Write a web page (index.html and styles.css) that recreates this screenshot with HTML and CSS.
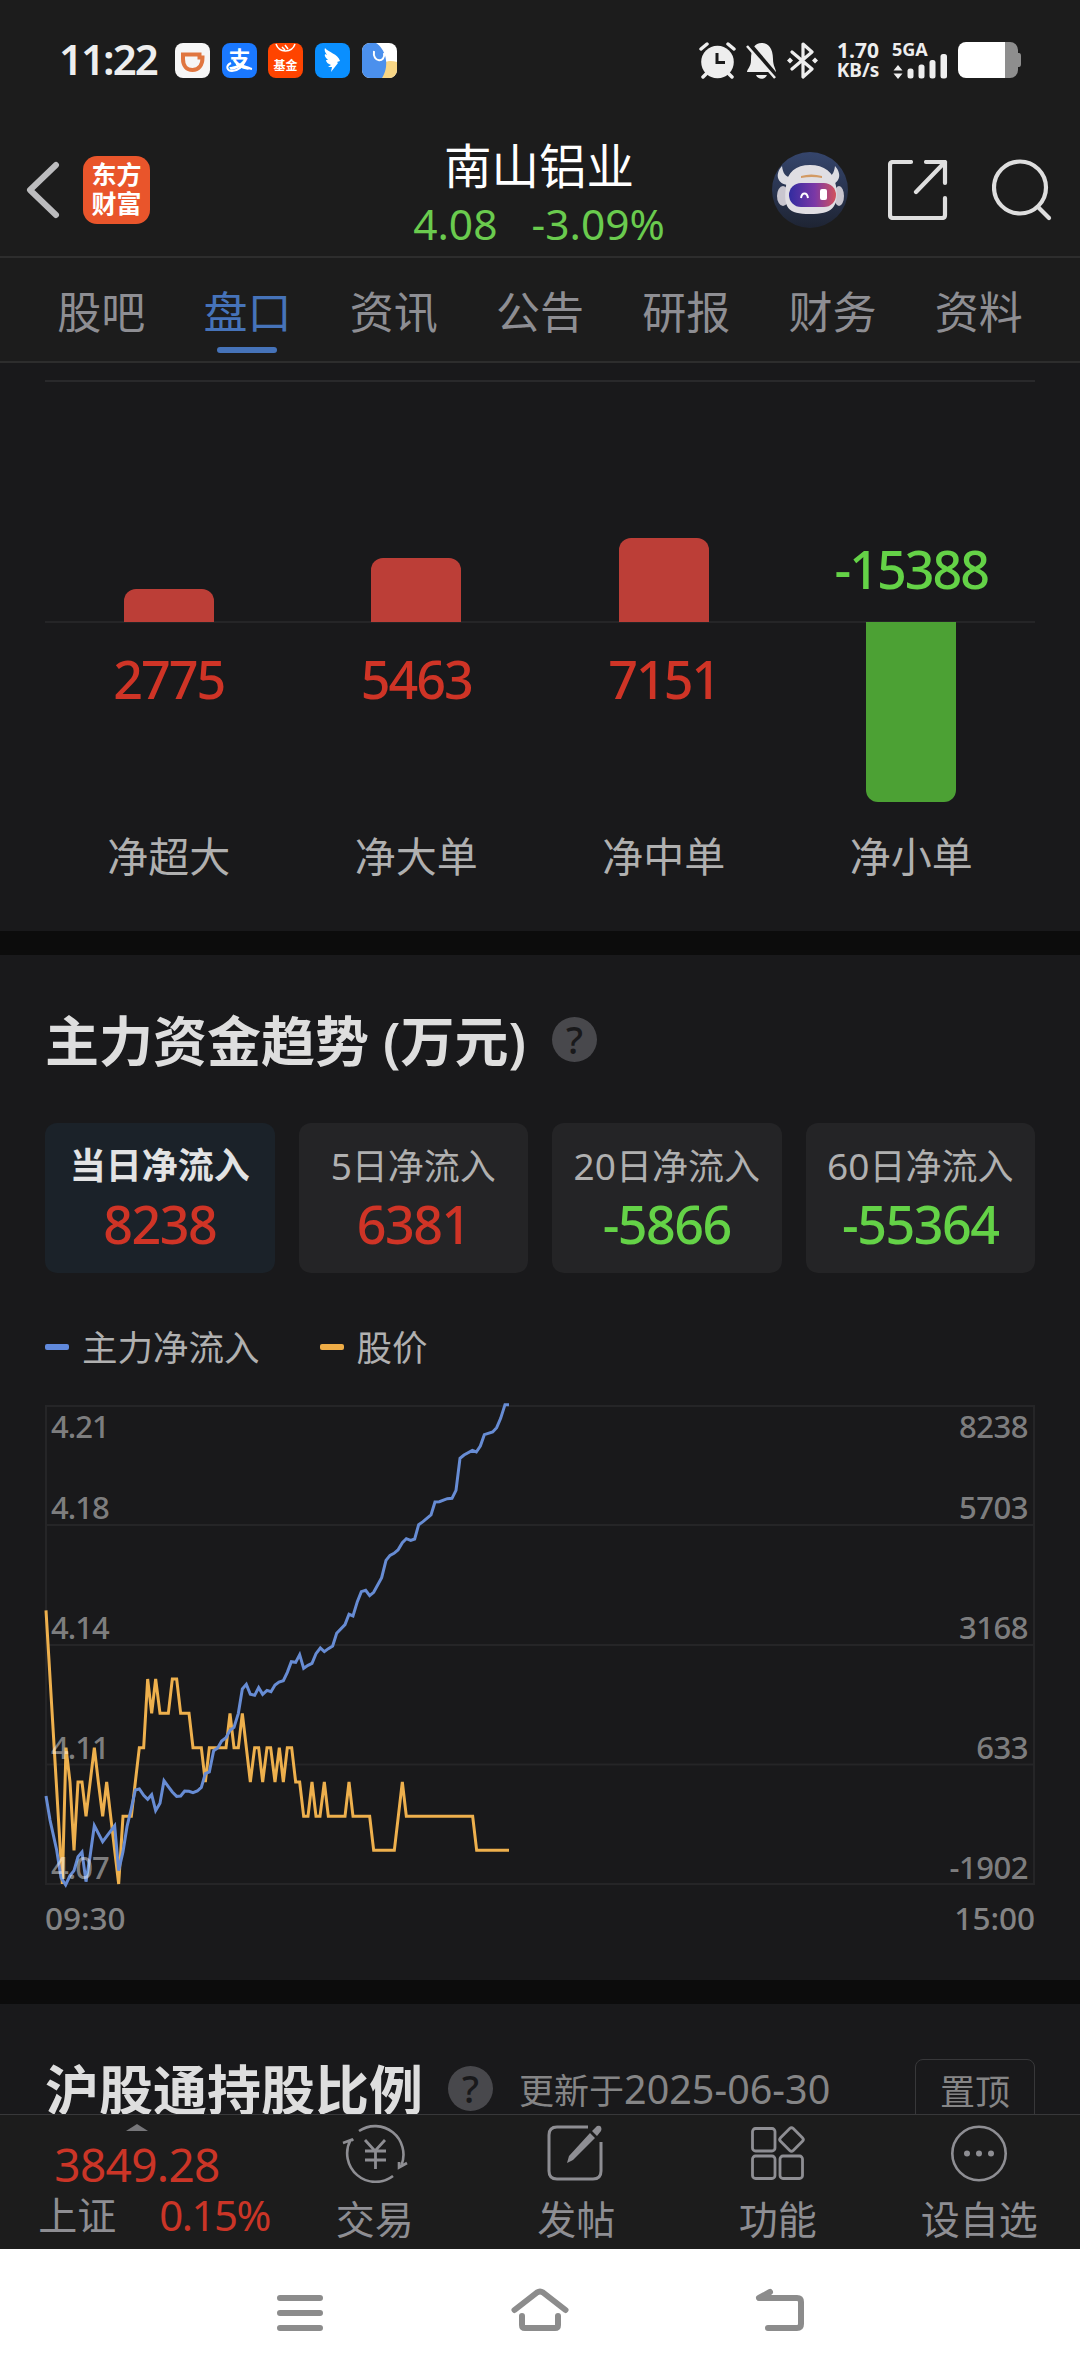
FILE: index.html
```html
<!DOCTYPE html>
<html lang="zh-CN">
<head>
    <meta charset="UTF-8">
    <meta name="viewport" content="width=device-width, initial-scale=1.0">
    <title>南山铝业</title>
    <link rel="stylesheet" href="styles.css">
</head>
<body>
    <div class="status-bar">
        <span class="clock">11:22</span>
        <div class="app-icons">
            <svg viewBox="0 0 35 35"><rect width="35" height="35" rx="8" fill="#f6f6f6"/><path d="M8 11.500h16.500v3h3c0 8-4 12.500-10 12.500S8 22.500 8 16z" fill="none" stroke="#e07640" stroke-width="4"/></svg>
            <svg viewBox="0 0 35 35"><rect width="35" height="35" rx="8" fill="#1a78ff"/><text x="17.500" y="24" class="pay-text">支</text><path d="M9 20c-6 3-4 8 1 8 6 0 11-5 13-10M14 21c6 0 10 4 16 5" fill="none" stroke="#fff" stroke-width="2"/></svg>
            <svg viewBox="0 0 35 35"><rect width="35" height="35" rx="8" fill="#ff4400"/><path d="M8 1a10 10 0 0 0 19 0M14 4l3 3M17 2l3 4" fill="none" stroke="#fff" stroke-width="1.500"/><text x="17.500" y="27" class="fund-text">基金</text></svg>
            <svg viewBox="0 0 35 35"><rect width="35" height="35" rx="8" fill="#0a8fff"/><path d="M10 5c3 4 13 6 15 13l-3 1 1 1-7 9 1-5h-4l3-2c-3-1-5-3-5-5l2 0c-2-2-4-4-3-6l2 1c-2-3-3-5-2-7z" fill="#fff"/></svg>
            <svg viewBox="0 0 35 35"><rect width="35" height="35" rx="8" fill="#fff"/><path d="M22 20c4-3 9-2 13-1v8a8 8 0 0 1-8 8h-8z" fill="#f8d685"/><path d="M8 0h6c8 5 15 20 6 35H8a8 8 0 0 1-8-8V8a8 8 0 0 1 8-8z" fill="#4b90ed"/><path d="M12 8c-2 12 12 12 10 2" fill="none" stroke="#fff" stroke-width="2"/></svg>
        </div>
        <div class="sys-icons">
            <svg width="37" height="37" viewBox="0 0 37 37"><circle cx="18.500" cy="20" r="16.300" fill="#eee"/><path d="M2 7l6-5M35 7l-6-5M4 35l4-4M33 35l-4-4" stroke="#eee" stroke-width="3.500" stroke-linecap="round"/><path d="M18 11v9.500h8" fill="none" stroke="#1c1c1c" stroke-width="3"/></svg>
            <svg width="31" height="37" viewBox="0 0 31 37"><path d="M1 30c0-3 4-5 4-12C5 6 9 1 15.500 1S27 6 27 17c0 7 3 10 3 13zM10 33h11c-2 5-9 5-11 0z" fill="#eee"/><path d="M3 2l28 33" stroke="#1c1c1c" stroke-width="5"/><path d="M1 4l28 32" stroke="#eee" stroke-width="2.500"/></svg>
            <svg width="31" height="37" viewBox="0 0 31 37"><path d="M5 10l20 17-9 8V2l9 8L5 27" fill="none" stroke="#eee" stroke-width="3.200" stroke-linejoin="round" stroke-linecap="round"/><path d="M3 15.500l3 3-3 3-3-3zM28 15.500l3 3-3 3-3-3z" fill="#eee"/></svg>
            <div class="speed"><span>1.70</span><span>KB/s</span></div>
            <svg class="signal" width="56" height="38" viewBox="0 0 56 38"><text x="0" y="15">5GA</text><path d="M6 24l4.500 5.500h-9zM6 38l4.500-5.500h-9z" fill="#eee"/><rect x="15.500" y="27.500" width="6" height="10" rx="2.500" fill="#eee"/><rect x="26.500" y="23.500" width="6" height="14" rx="2.500" fill="#eee"/><rect x="37.500" y="19" width="6" height="18.500" rx="2.500" fill="#eee"/><rect x="48.500" y="13" width="6.500" height="24.500" rx="2.500" fill="#eee"/></svg>
            <svg width="64" height="36" viewBox="0 0 64 36"><path d="M46 0h6a8 8 0 0 1 8 8v3h1q2 0 2 3v8q0 3-2 3h-1v3a8 8 0 0 1-8 8h-6z" fill="#8e8e8e"/><path d="M8 0h39v36H8a8 8 0 0 1-8-8V8a8 8 0 0 1 8-8z" fill="#fff"/></svg>
        </div>
    </div>

    <header class="header">
        <div class="header-left">
            <svg width="36" height="58" viewBox="0 0 36 58"><path d="M30 4L4 29l26 25" fill="none" stroke="#bcbcbe" stroke-width="6" stroke-linecap="round" stroke-linejoin="round"/></svg>
            <div class="logo">东方<br>财富</div>
        </div>
        <div class="stock">
            <h1>南山铝业</h1>
            <p><span>4.08</span><span>-3.09%</span></p>
        </div>
        <div class="header-right">
            <svg width="76" height="76" viewBox="0 0 76 76">
                <defs>
                    <linearGradient id="sky" x1="0" y1="0" x2="0" y2="1"><stop offset="0" stop-color="#35456c"/><stop offset="1" stop-color="#1e2433"/></linearGradient>
                    <linearGradient id="visor" x1="0" y1="0" x2="1" y2="0"><stop offset="0" stop-color="#322ca0"/><stop offset=".55" stop-color="#7b38a6"/><stop offset="1" stop-color="#d2525c"/></linearGradient>
                </defs>
                <circle cx="38" cy="38" r="38" fill="url(#sky)"/>
                <path d="M10 14c-8 9-4 18 6 19l5-8c-7 1-10-3-11-11zM63 14c8 9 4 18-6 19l-5-8c7 1 10-3 11-11z" fill="#dcdce2"/>
                <ellipse cx="11" cy="44" rx="6" ry="10" fill="#c9c6cf"/><ellipse cx="67" cy="44" rx="5" ry="10" fill="#c9c6cf"/>
                <path d="M14 34c1-14 10-21 24-21s24 7 26 21c3 22-4 28-26 28s-27-6-24-28z" fill="#e0dee3"/>
                <path d="M29 24q10-3 21 0v2q-10-2-21 0z" fill="#d39a64"/>
                <rect x="17" y="31" width="47" height="24" rx="12" fill="url(#visor)"/>
                <path d="M29 46c1-6 6-6 7 0" fill="none" stroke="#fff" stroke-width="2"/><rect x="48" y="37" width="7" height="11" rx="2" fill="#fff"/>
            </svg>
            <svg class="share" width="60" height="60" viewBox="0 0 60 60"><path d="M23 2H5Q2 2 2 5v50q0 3 3 3h49q3 0 3-3V38M38 2h19v21M57 2L28 32" fill="none" stroke="#dedede" stroke-width="4.200" stroke-linecap="round" stroke-linejoin="round"/></svg>
            <svg width="60" height="62" viewBox="0 0 60 62"><circle cx="28" cy="28.500" r="26" fill="none" stroke="#dedede" stroke-width="4.200"/><path d="M46 48l11 11" stroke="#dedede" stroke-width="4.200" stroke-linecap="round"/></svg>
        </div>
    </header>

    <nav class="tabs">
        <a>股吧</a>
        <a class="active">盘口</a>
        <a>资讯</a>
        <a>公告</a>
        <a>研报</a>
        <a>财务</a>
        <a>资料</a>
    </nav>

    <main class="content">
        <section class="orders">
            <div class="order up">
                <div class="top"><i class="bar" style="height: 33px"></i></div>
                <div class="bottom"><b>2775</b></div>
                <span>净超大</span>
            </div>
            <div class="order up">
                <div class="top"><i class="bar" style="height: 64px"></i></div>
                <div class="bottom"><b>5463</b></div>
                <span>净大单</span>
            </div>
            <div class="order up">
                <div class="top"><i class="bar" style="height: 84px"></i></div>
                <div class="bottom"><b>7151</b></div>
                <span>净中单</span>
            </div>
            <div class="order down">
                <div class="top"><b>-15388</b></div>
                <div class="bottom"><i class="bar" style="height: 180px"></i></div>
                <span>净小单</span>
            </div>
        </section>

        <section class="trend">
            <h2>主力资金趋势 (万元) <i class="help">?</i></h2>
            <div class="cards">
                <div class="card active"><span>当日净流入</span><b class="red">8238</b></div>
                <div class="card"><span><em>5</em>日净流入</span><b class="red">6381</b></div>
                <div class="card"><span><em>20</em>日净流入</span><b class="green">-5866</b></div>
                <div class="card"><span><em>60</em>日净流入</span><b class="green">-55364</b></div>
            </div>
            <div class="legend">
                <span class="blue">主力净流入</span>
                <span class="orange">股价</span>
            </div>
            <svg class="chart" width="990" height="480" viewBox="0 0 990 480">
                <path class="grid" d="M1 1h988v478H1zM1 120h988M1 240h988M1 359.500h988"/>
                <g transform="scale(.33333) translate(-45 525)">
                    <polyline class="line price" points="48,91 97,912 108,503 120,606 132,811 144,606 156,606 168,709 193,503 205,606 218,709 230,606 242,709 254,811 266,912 279,709 304,709 328,503 341,503 353,297 365,400 377,297 390,400 415,400 427,297 440,297 452,400 477,400 489,503 514,503 526,606 538,503 588,503 600,400 612,503 625,503 637,400 649,503 661,606 674,503 686,503 698,606 711,503 722,503 735,606 748,503 760,606 772,503 785,503 797,606 809,606 821,709 834,709 846,606 858,709 870,709 883,606 895,709 945,709 957,606 969,709 1019,709 1031,811 1093,811 1117,606 1129,709 1328,709 1340,811 1437,811"/>
                    <polyline class="line inflow" points="48,648 60,720 80,810 93,893 107,915 120,887 132,872 144,830 156,816 168,905 180,830 193,737 218,785 254,737 266,872 279,815 291,740 304,685 316,630 328,627 341,646 353,658 365,644 377,692 390,670 402,602 415,620 427,636 440,649 452,648 464,633 477,634 489,638 502,633 514,622 526,581 538,576 551,512 563,504 575,483 588,473 600,451 612,442 625,400 637,327 649,313 661,343 674,346 686,323 698,343 711,331 723,335 735,315 747,306 760,302 772,277 784,245 797,247 809,224 821,265 834,256 846,250 858,221 871,204 883,215 895,206 908,198 920,160 945,134 957,103 969,108 982,65 994,35 1007,31 1019,47 1031,37 1055,-7 1068,-59 1080,-74 1092,-80 1104,-90 1117,-112 1129,-124 1142,-119 1154,-123 1166,-166 1179,-175 1203,-195 1215,-234 1228,-235 1252,-244 1266,-245 1278,-269 1290,-365 1302,-375 1327,-389 1339,-384 1351,-402 1363,-436 1388,-444 1400,-457 1412,-485 1425,-526 1437,-526"/>
                </g>
                <g class="axis">
                    <text x="6" y="33">4.21</text>
                    <text x="6" y="114">4.18</text>
                    <text x="6" y="234">4.14</text>
                    <text x="6" y="354">4.11</text>
                    <text x="6" y="474">4.07</text>
                </g>
                <g class="axis right">
                    <text x="983" y="33">8238</text>
                    <text x="983" y="114">5703</text>
                    <text x="983" y="234">3168</text>
                    <text x="983" y="354">633</text>
                    <text x="983" y="474">-1902</text>
                </g>
            </svg>
            <div class="times"><span>09:30</span><span>15:00</span></div>
        </section>

        <section class="holding">
            <h2>沪股通持股比例 <i class="help">?</i></h2>
            <span class="update">更新于<em>2025-06-30</em></span>
            <button class="pin">置顶</button>
        </section>
    </main>

    <footer class="toolbar">
        <div class="index">
            <i class="arrow"></i>
            <b>3849.28</b>
            <p><span>上证</span><em>0.15%</em></p>
        </div>
        <div class="tool">
            <svg viewBox="0 0 66 60"><path d="M17 8A28.500 28.500 0 0 1 59.500 42M51 53A28.500 28.500 0 0 1 8.500 17M1 20l9-3.500 1 1.500M65 40l-8 4.500V39" fill="none" stroke="#8e8e93" stroke-width="2.600"/><path d="M23 17l10 11 10-11M23 28h21M23 37h21M33.500 28v18" fill="none" stroke="#8e8e93" stroke-width="2.800"/></svg>
            <span>交易</span>
        </div>
        <div class="tool">
            <svg viewBox="0 0 66 60"><path d="M45 4H14q-8 0-8 8v36q0 8 8 8h36q8 0 8-8V19" fill="none" stroke="#8e8e93" stroke-width="3"/><path d="M47 10l5 5-22 22-6 3 2-7zM49 8l5-5q3-1 4 1t0 4l-4 5z" fill="#8e8e93"/></svg>
            <span>发帖</span>
        </div>
        <div class="tool">
            <svg viewBox="0 0 66 60"><g fill="none" stroke="#8e8e93" stroke-width="2.800"><rect x="7.500" y="5.500" width="22.500" height="22.500" rx="3"/><rect x="7.500" y="33" width="22.500" height="22.500" rx="3"/><rect x="35" y="33" width="22.500" height="22.500" rx="3"/><rect x="37.500" y="7.500" width="18" height="18" rx="2.500" transform="rotate(45 46.500 16.500)"/></g></svg>
            <span>功能</span>
        </div>
        <div class="tool">
            <svg viewBox="0 0 66 60"><circle cx="33" cy="30.500" r="26.700" fill="none" stroke="#8e8e93" stroke-width="2.600"/><g fill="#8e8e93"><circle cx="21" cy="30.500" r="3"/><circle cx="33" cy="30.500" r="3"/><circle cx="45" cy="30.500" r="3"/></g></svg>
            <span>设自选</span>
        </div>
    </footer>

    <div class="nav-bar">
        <svg viewBox="0 0 60 50"><path d="M10 10h40M10 25h40M10 40h40"/></svg>
        <svg viewBox="0 0 60 50"><path d="M4.500 22L27 4.500q3-2 6 0L55.500 22M12 28v9q0 3 3 3h30q3 0 3-3v-9"/></svg>
        <svg viewBox="0 0 60 50"><path d="M20 4L9 10h38q4 0 4 4v22q0 4-4 4H18"/></svg>
    </div>
</body>
</html>
```

FILE: styles.css
```css
* {
    box-sizing: border-box;
}
body {
    font-family: "Noto Sans", "Noto Sans CJK SC", sans-serif;
    margin: 0;
    height: 2376px;
    display: flex;
    flex-direction: column;
    background: #1c1c1c;
    color: #b0b0b0;
    overflow: hidden;
}
h1, h2, p {
    margin: 0;
}
i, em {
    font-style: normal;
}
svg {
    display: block;
    flex: none;
}

/* status bar */
.status-bar {
    height: 120px;
    display: flex;
    align-items: center;
    padding: 0 58px 0 59px;
}
.clock {
    font-size: 42px;
    font-weight: 600;
    color: #eee;
    width: 116px;
    letter-spacing: -2px;
    line-height: 60px;
    padding-bottom: 2px;
}
.app-icons {
    display: flex;
    gap: 11.700px;
}
.app-icons svg {
    width: 35px;
    height: 35px;
}
.pay-text {
    font-size: 22px;
    font-weight: 700;
    fill: #fff;
    text-anchor: middle;
}
.fund-text {
    font-size: 12px;
    font-weight: 700;
    fill: #fff;
    text-anchor: middle;
}
.sys-icons {
    margin-left: auto;
    display: flex;
    align-items: center;
    gap: 10px;
}
.speed {
    display: flex;
    flex-direction: column;
    width: 48px;
    margin-left: 6px;
    font-weight: 700;
    color: #eee;
    text-align: center;
    font-size: 19px;
    line-height: 20px;
}
.speed span:first-child {
    font-size: 21px;
}
.signal {
    overflow: visible;
}
.signal text {
    font-size: 18px;
    font-weight: 700;
    fill: #eee;
}

/* header */
.header {
    height: 138px;
    display: flex;
    justify-content: space-between;
    border-bottom: 2px solid #2d2d2d;
    padding: 0 28px 0 26px;
}
.header-left,
.header-right {
    display: flex;
    align-items: center;
    width: 290px;
    padding-top: 4px;
}
.logo {
    width: 67px;
    height: 68px;
    margin-left: 21px;
    border-radius: 14px;
    background: #e9552b;
    color: #fff;
    font-size: 25px;
    font-weight: 700;
    line-height: 29px;
    padding-top: 4px;
    text-align: center;
}
.stock {
    text-align: center;
    padding-top: 16px;
}
.stock h1 {
    font-size: 47.500px;
    font-weight: 400;
    line-height: 60px;
    color: #fff;
}
.stock p {
    display: flex;
    justify-content: center;
    gap: 34px;
    font-size: 42.500px;
    line-height: 56px;
    color: #6acb4e;
}
.header-right {
    justify-content: flex-end;
    gap: 40px;
}
.share {
    margin-right: 4px;
}

/* tabs */
.tabs {
    height: 105px;
    display: flex;
    padding: 0 28px;
    border-bottom: 2px solid #2d2d2d;
}
.tabs a {
    flex: 1;
    position: relative;
    text-align: center;
    font-size: 44px;
    line-height: 108px;
    color: #8e8e93;
}
.tabs .active {
    color: #4673b9;
}
.tabs .active::after {
    content: "";
    position: absolute;
    left: 50%;
    bottom: 8px;
    width: 60px;
    height: 6px;
    margin-left: -30px;
    border-radius: 3px;
    background: #4673b9;
}

.content {
    height: 1751px;
    overflow: hidden;
    background: #19191b;
}
.red {
    color: #cf3426;
}
.green {
    color: #64d247;
}

/* order sizes */
.orders {
    height: 568px;
    margin: 0 45px;
    padding-top: 17px;
    display: flex;
}
.order {
    flex: 1;
    display: flex;
    flex-direction: column;
    border-top: 2px solid #29292b;
    text-align: center;
    font-size: 41px;
}
.top {
    height: 241px;
    display: flex;
    align-items: flex-end;
    justify-content: center;
    border-bottom: 2px solid #252527;
}
.bottom {
    height: 201px;
    display: flex;
    justify-content: center;
    align-items: flex-start;
}
.order b {
    font-size: 52px;
    font-weight: 500;
    line-height: 60px;
    letter-spacing: -2px;
}
.up b {
    padding-top: 26px;
    color: #cf3426;
}
.down b {
    padding-bottom: 22px;
    color: #64d247;
}
.bar {
    width: 90px;
    background: #bc3e37;
    border-radius: 12px 12px 0 0;
    margin-bottom: -1px;
}
.down .bar {
    background: #4ca134;
    border-radius: 0 0 12px 12px;
    margin: -1px 0 0;
}
.order span {
    line-height: 64px;
}

/* main capital trend */
.trend {
    height: 1073px;
    border-top: 24px solid #0c0c0c;
    border-bottom: 24px solid #0c0c0c;
    padding: 50px 45px 0;
}
h2 {
    display: flex;
    align-items: center;
    font-size: 54px;
    font-weight: 600;
    line-height: 72px;
    color: #dedede;
    white-space: pre;
}
.help {
    width: 45px;
    height: 45px;
    border-radius: 50%;
    background: #48484c;
    color: #19191b;
    font-size: 38px;
    font-weight: 500;
    line-height: 45px;
    text-align: center;
    margin: -4px 0 0 12px;
}
.cards {
    display: flex;
    gap: 24px;
    margin-top: 46px;
}
.card {
    flex: 1;
    height: 150px;
    border-radius: 12px;
    background: #242426;
    display: flex;
    flex-direction: column;
    align-items: center;
    padding-top: 15px;
    font-size: 36px;
    white-space: nowrap;
}
.card span {
    height: 56px;
    line-height: 56px;
}
.card.active {
    background: #1b2229;
}
.card.active span {
    color: #e2e3e4;
    font-weight: 700;
}
.card b {
    font-size: 52px;
    font-weight: 500;
    line-height: 60px;
    letter-spacing: -1.500px;
}
.legend {
    display: flex;
    gap: 60px;
    margin-top: 46px;
    font-size: 35.500px;
    line-height: 56px;
}
.legend span {
    display: flex;
    align-items: center;
}
.legend span::before {
    content: "";
    width: 24px;
    height: 6px;
    border-radius: 2px;
    margin-right: 13px;
    background: #6089dc;
}
.legend .orange::before {
    background: #eeac46;
}
.chart {
    margin-top: 30px;
    overflow: visible;
}
.grid {
    fill: none;
    stroke: #252527;
    stroke-width: 2;
}
.line {
    fill: none;
    stroke-width: 9;
}
.price {
    stroke: #eeb04d;
}
.inflow {
    stroke: #678cd4;
}
.axis {
    font-size: 31px;
    font-weight: 500;
    letter-spacing: -1px;
    fill: rgba(255, 255, 255, 0.45);
}
.axis.right {
    letter-spacing: -.5px;
    text-anchor: end;
}
.times {
    display: flex;
    justify-content: space-between;
    font-size: 31.500px;
    font-weight: 500;
    line-height: 40px;
    margin-top: 13px;
    color: #838384;
}

/* northbound holding */
.holding {
    display: flex;
    align-items: flex-start;
    padding: 50px 45px 0;
}
.holding .help {
    margin-left: 11px;
}
.update {
    font-size: 35px;
    line-height: 70px;
    margin-left: 26px;
    color: #858586;
}
.update em {
    font-size: 39.500px;
}
.card em {
    font-size: 37px;
}
.pin {
    width: 120px;
    height: 72px;
    margin: 5px 0 0 auto;
    border: 1px solid #38383a;
    border-radius: 8px;
    background: none;
    color: #858586;
    font-family: inherit;
    font-size: 35px;
    line-height: 60px;
    padding: 0 0 7px;
}

/* bottom toolbar */
.toolbar {
    height: 135px;
    display: flex;
    border-top: 1px solid #38383a;
}
.index {
    width: 274px;
    display: flex;
    flex-direction: column;
    align-items: center;
    color: #cb3527;
}
.arrow {
    margin-top: 9px;
    border: 11px solid transparent;
    border-top: 0;
    border-bottom: 7px solid #77777a;
}
.index b {
    font-size: 46px;
    font-weight: 400;
    line-height: 66px;
    letter-spacing: -.7px;
}
.index p {
    display: flex;
    gap: 43px;
    line-height: 36px;
    font-size: 39px;
    white-space: nowrap;
    margin-left: 34px;
}
.index span {
    color: #8e8e93;
}
.index em {
    font-size: 42px;
    letter-spacing: -1.500px;
}
.tool {
    flex: 1;
    display: flex;
    flex-direction: column;
    align-items: center;
    padding-top: 8px;
    font-size: 39px;
    color: #8e8e93;
}
.tool svg {
    width: 66px;
    height: 60px;
    margin-bottom: 18px;
}
.tool span {
    line-height: 36px;
}

/* system navigation */
.nav-bar {
    height: 127px;
    background: #fff;
    display: flex;
    justify-content: center;
    gap: 180px;
    padding-top: 39px;
}
.nav-bar svg {
    width: 60px;
    height: 50px;
    fill: none;
    stroke: #8c8c8c;
    stroke-width: 6;
    stroke-linecap: round;
    stroke-linejoin: round;
}
```
